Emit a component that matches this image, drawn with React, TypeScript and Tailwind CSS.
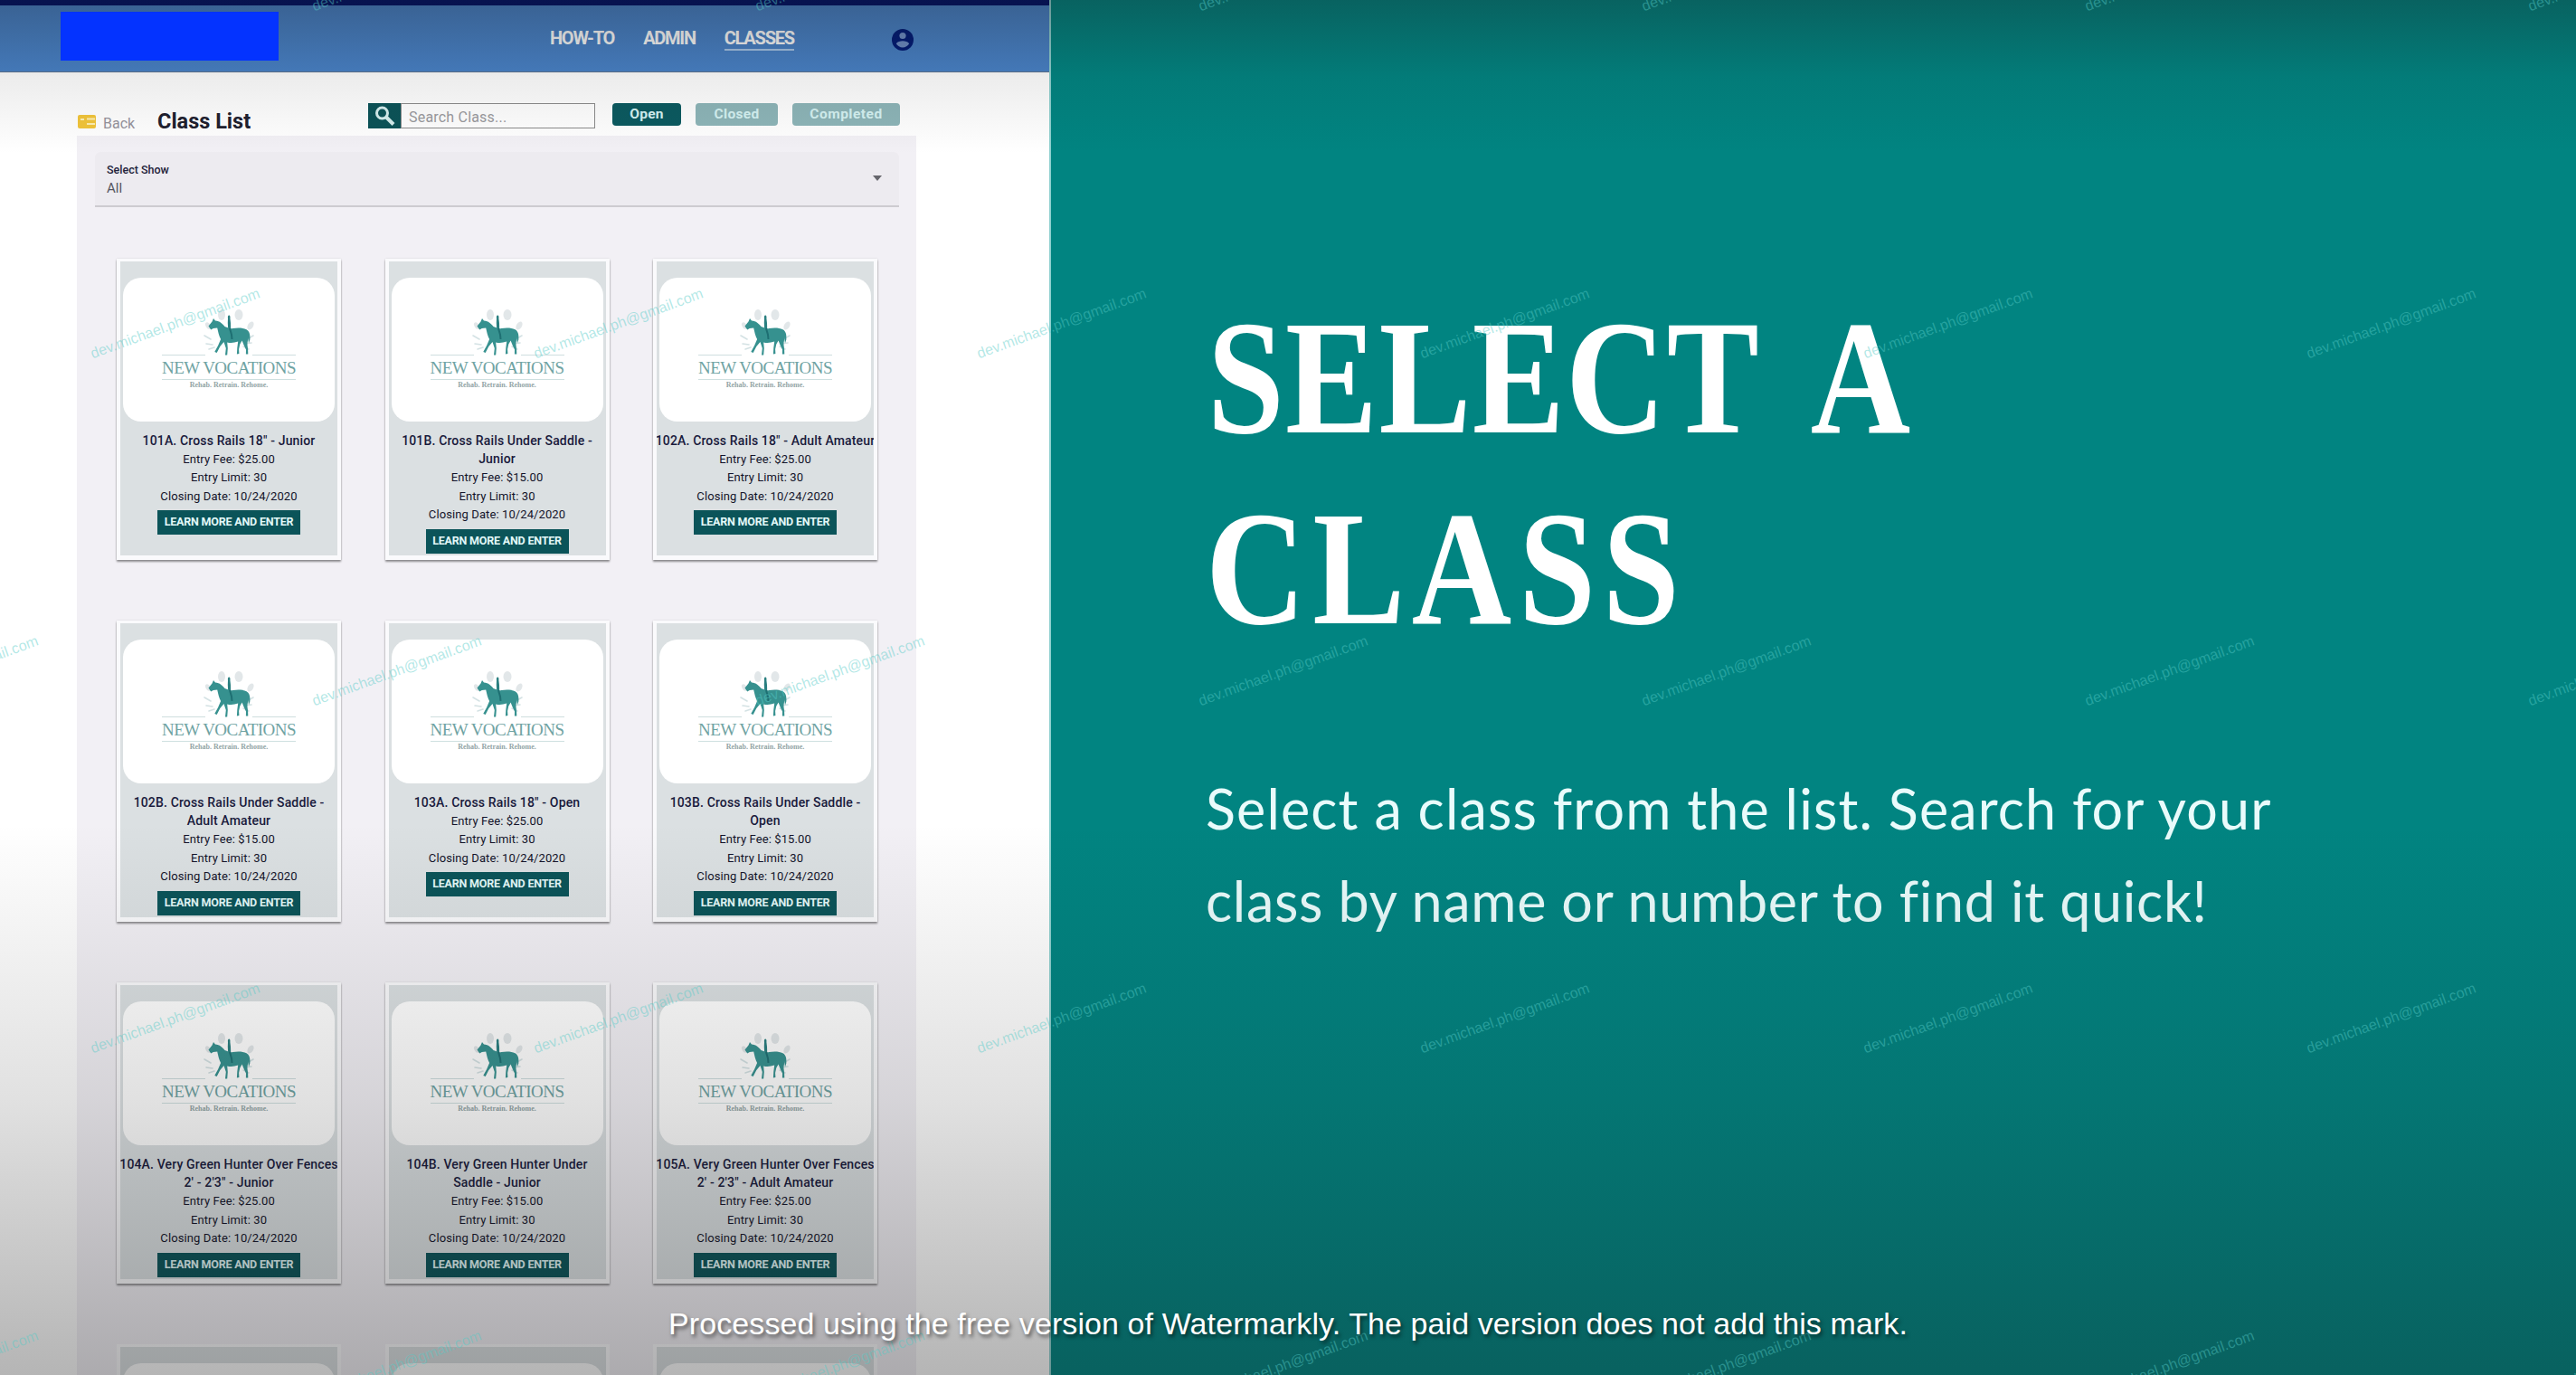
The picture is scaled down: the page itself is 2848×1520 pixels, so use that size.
import React from "react";

type ClassItem = { title: string[]; fee: string };

const rows: ClassItem[][] = [
  [
    { title: ['101A. Cross Rails 18" - Junior'], fee: "$25.00" },
    { title: ["101B. Cross Rails Under Saddle -", "Junior"], fee: "$15.00" },
    { title: ['102A. Cross Rails 18" - Adult Amateur'], fee: "$25.00" },
  ],
  [
    { title: ["102B. Cross Rails Under Saddle -", "Adult Amateur"], fee: "$15.00" },
    { title: ['103A. Cross Rails 18" - Open'], fee: "$25.00" },
    { title: ["103B. Cross Rails Under Saddle -", "Open"], fee: "$15.00" },
  ],
  [
    { title: ["104A. Very Green Hunter Over Fences", "2' - 2'3\" - Junior"], fee: "$25.00" },
    { title: ["104B. Very Green Hunter Under", "Saddle - Junior"], fee: "$15.00" },
    { title: ["105A. Very Green Hunter Over Fences", "2' - 2'3\" - Adult Amateur"], fee: "$25.00" },
  ],
];

function HorseMark() {
  return (
    <svg width="64" height="54" viewBox="0 0 64 54" className="block">
      <g fill="#b9c4ca" opacity="0.4">
        <ellipse cx="24" cy="8" rx="4" ry="6" />
        <ellipse cx="43" cy="8" rx="4.5" ry="6" />
        <ellipse cx="56" cy="20" rx="3" ry="5" transform="rotate(30 56 20)" />
        <ellipse cx="9" cy="20" rx="2.5" ry="4" transform="rotate(-30 9 20)" />
      </g>
      <g stroke="#a9c6ca" strokeWidth="1.600" fill="none" opacity="0.5" strokeLinecap="round">
        <path d="M5 31l7 4M7 40l7 1M10 46l6-2M59 31l-7 4M57 39l-7 1M54 46l-6-3" />
      </g>
      <path
        d="M31.200 24l-.4-7 .2-5c-.4-2 .2-3.600 1.200-3.600s1.600 1.600 1.200 3.600l.6 5 .2 7z"
        fill="#2a7f80"
      />
      <path
        d="M9.500 20.500l4-5 1.500-3.500 2 2.500c5 .2 8 3.500 10.500 6.500l4 1.500c1.500.8 3.500.8 5 .5 5-.8 11-.8 15 1.200 3.700 2 4.200 6.300 3.800 11.300l-1.300 4-.9-6.500c.2 4-.8 5-.6 8.500l.6 4.500.2 5.500h-2.400l.1-5-2.600-5.500-1.800-4.500-2.300 4-1.200 5.500.3 5-2.500.5.4-7 .9-7c-4 1.500-8 2-12 1l.6 6.500-.6 7.500h-2.200l.8-7.500-2.300-7-4.200 5-3.600 7-2.400-1 3.800-7 3-7c-1.900-3.500-2.900-8-3.900-12.500l-4.400.5-2.600 1.500z"
        fill="#36918f"
      />
      <path d="M33 23l2 7 .500 5" stroke="#1e6f72" strokeWidth="2" fill="none" />
    </svg>
  );
}

function Logo() {
  return (
    <div className="flex h-[159px] flex-col items-center rounded-[20px] bg-white pt-[33px]">
      <HorseMark />
      <div className="-mt-[2px] flex w-[148px] justify-between">
        <span className="h-px w-[48px] bg-[#cfdedf]" />
        <span className="h-px w-[48px] bg-[#cfdedf]" />
      </div>
      <p className="mt-[4px] h-[20px] whitespace-nowrap font-['Liberation_Serif'] text-[19px] leading-[20px] tracking-[-0.55px] text-[#6fa3a3]">
        NEW VOCATIONS
      </p>
      <span className="mt-[2px] h-px w-[148px] bg-[#cfe0e0]" />
      <p className="mt-[1px] whitespace-nowrap font-['Liberation_Serif'] text-[8px] font-bold leading-[10px] text-[#93a5a6]">
        Rehab. Retrain. Rehome.
      </p>
    </div>
  );
}

function ClassCard({ item }: { item: ClassItem }) {
  return (
    <article className="h-[333px] w-[248px] border-x-[4px] border-t-[3px] border-b-[5px] border-[#fafafc] bg-[#dbe0e2] px-[3px] pt-[18px] text-center font-['Roboto'] shadow-[0_2px_2px_rgba(0,0,0,0.4),0_0_2px_rgba(0,0,0,0.12)]">
      <Logo />
      <div className="-mx-[3px] mt-[11px] overflow-hidden">
        {item.title.map((line) => (
          <h3
            key={line}
            className="flex h-[20.500px] items-center justify-center whitespace-nowrap text-[14px] font-medium tracking-[0.15px] text-[#191a3c]"
          >
            {line}
          </h3>
        ))}
        <div className="text-[13px] leading-[20.500px] tracking-[0.1px] text-[#14142a]">
          <p>Entry Fee: {item.fee}</p>
          <p>Entry Limit: 30</p>
          <p>Closing Date: 10/24/2020</p>
        </div>
      </div>
      <button className="mx-auto mt-[5px] flex h-[27px] w-[158px] items-center justify-center whitespace-nowrap bg-[#0b5459] text-[12.500px] font-bold tracking-[-0.2px] text-[#e2f8f8]">
        LEARN MORE AND ENTER
      </button>
    </article>
  );
}

function SiteHeader() {
  return (
    <header className="flex h-[80px] items-start border-t-[6px] border-b border-t-[#001168] border-b-[#5d7390] bg-[#4882c8] font-['Roboto']">
      <div className="relative z-10 mt-[7px] ml-[67px] h-[54px] w-[241px] bg-[#0433ff]" />
      <nav className="ml-[300px] flex gap-[32px] pt-[25px] text-[20px] font-bold leading-[22px] tracking-[-1.250px] text-white">
        <a>HOW-TO</a>
        <a>ADMIN</a>
        <a className="border-b-2 border-[#a9c8ea] pb-px">CLASSES</a>
      </nav>
      <svg className="mt-[26px] ml-[108px]" width="24" height="24" viewBox="0 0 24 24">
        <circle cx="12" cy="12" r="12" fill="#001a78" />
        <circle cx="12" cy="7.500" r="3.600" fill="#6f8fc8" />
        <path d="M4.800 16.200c1.500-2.300 4.300-3 7.200-3s5.700.7 7.200 3c-1.600 2.700-4.200 4.200-7.200 4.200s-5.600-1.500-7.200-4.200z" fill="#6f8fc8" />
      </svg>
    </header>
  );
}

function Toolbar() {
  return (
    <div className="flex h-[70px] items-start font-['Roboto']">
      <svg className="mt-[47px] ml-[86px]" width="20" height="15" viewBox="0 0 20 15">
        <rect width="20" height="15" rx="2" fill="#f2c53a" />
        <path d="M10 4.500h9M10 10h9M3 5h4" stroke="#fdf0b4" strokeWidth="1.800" />
      </svg>
      <span className="mt-[47px] ml-[8px] w-[60px] text-[16px] leading-[20px] text-[#96939c]">Back</span>
      <h1 className="mt-[39px] w-[233px] whitespace-nowrap text-[23.500px] font-bold leading-[30px] text-[#20202e]">
        Class List
      </h1>
      <div className="mt-[34px] flex h-[28px] w-[251px]">
        <span className="flex w-[36px] items-center justify-center bg-[#0b5358]">
          <svg width="24" height="24" viewBox="0 0 24 24" fill="none" stroke="#d5eeee">
            <circle cx="9.500" cy="9" r="6" strokeWidth="3" />
            <path d="M14 13.500l8 8" strokeWidth="4" />
          </svg>
        </span>
        <span className="flex flex-1 items-center border border-[#8c8c8c] bg-white pt-[3px] pl-[8px] text-[16px] tracking-[0.2px] text-[#9a9a9e]">
          Search Class...
        </span>
      </div>
      <div className="mt-[34px] ml-[19px] flex h-[25px] gap-[16px] text-[15.500px] font-bold text-[#d5f2f2]">
        <span className="flex w-[76px] items-center justify-center rounded-[4px] bg-[#0b5a60] tracking-[0.2px]">Open</span>
        <span className="flex w-[91px] items-center justify-center rounded-[4px] bg-[#8db5b8] tracking-[0.3px]">Closed</span>
        <span className="flex w-[119px] items-center justify-center rounded-[4px] bg-[#8db5b8] tracking-[0.5px]">Completed</span>
      </div>
    </div>
  );
}

function ClassListPage() {
  return (
    <section className="flex h-[1520px] w-[1160px] flex-none flex-col overflow-hidden bg-white">
      <SiteHeader />
      <Toolbar />
      <main className="ml-[85px] flex w-[928px] flex-1 flex-col bg-[#f2f0f5] pt-[18px]">
        <div className="ml-[20px] flex h-[61px] w-[889px] flex-none items-center justify-between rounded-t-[6px] border-b-2 border-[#cdcbd0] bg-[#edebf0] pr-[18px] pl-[13px] font-['Roboto']">
          <div className="pt-[2px] text-[#23233a]">
            <p className="text-[12.500px] font-medium leading-[18px]">Select Show</p>
            <p className="text-[15px] leading-[22px] text-[#55555f]">All</p>
          </div>
          <svg width="12" height="7" viewBox="0 0 12 7">
            <path d="M1 0h10L6 6z" fill="#66666c" />
          </svg>
        </div>
        <div className="mt-[57px] ml-[44px] flex w-[841px] flex-col gap-[67px]">
          {rows.map((row, i) => (
            <div key={i} className="flex justify-between">
              {row.map((item) => (
                <ClassCard key={item.title[0]} item={item} />
              ))}
            </div>
          ))}
          <div className="flex h-[34px] justify-between overflow-hidden">
            {[0, 1, 2].map((n) => (
              <div key={n} className="h-[34px] w-[248px] border-x-[4px] border-t-[3px] border-[#fafafc] bg-[#dbe0e2] px-[3px] pt-[18px]">
                <div className="h-[40px] rounded-t-[20px] bg-white" />
              </div>
            ))}
          </div>
        </div>
      </main>
    </section>
  );
}

function Slide() {
  return (
    <section className="flex h-[1520px] flex-1 flex-col border-l-2 border-[#8fd0cf] bg-[#018481] pl-[171px]">
      <h2 className="mt-[312px] w-[1100px] origin-left scale-x-[0.85] whitespace-nowrap font-['Liberation_Serif'] text-[180px] font-bold leading-[211px] text-white">
        <span className="block pl-[2px] tracking-[1.500px] [word-spacing:32px]">SELECT A</span>
        <span className="block tracking-[9px]">CLASS</span>
      </h2>
      <p className="mt-[109px] flex flex-col whitespace-nowrap font-['Lato'] text-[61px] leading-[102px] text-[#e9fbfb]">
        <span className="tracking-[1.150px]">Select a class from the list. Search for your</span>
        <span className="tracking-[0.700px]">class by name or number to find it quick!</span>
      </p>
    </section>
  );
}

const watermarks = [0, 1, 2, 3, 4].flatMap((r) =>
  [0, 1, 2, 3, 4, 5, 6].map((c) => ({
    left: (r % 2 === 0 ? 350 : 105) + (c - 1) * 490,
    top: -7 + r * 384,
  })),
);

function Overlay() {
  return (
    <div className="pointer-events-none absolute inset-0 overflow-hidden">
      <div className="absolute inset-x-0 top-0 h-[170px] bg-linear-to-b from-[#181818]/31 via-[#181818]/8 to-transparent" />
      <div className="absolute inset-x-0 bottom-0 h-[610px] bg-linear-to-b from-transparent via-[#181818]/13 to-[#181818]/32" />
      {watermarks.map((m, i) => (
        <span
          key={i}
          className="absolute origin-bottom-left -rotate-20 whitespace-nowrap font-['Liberation_Sans'] text-[16.200px] leading-[26px] text-[#55cbc7]/45"
          style={{ left: m.left, top: m.top }}
        >
          dev.michael.ph@gmail.com
        </span>
      ))}
      <p className="absolute top-[1443px] left-0 w-full text-center font-['Liberation_Sans'] text-[34px] leading-[40px] tracking-[0.090px] text-white [text-shadow:2px_3px_4px_rgba(0,0,0,0.55)]">
        Processed using the free version of Watermarkly. The paid version does not add this mark.
      </p>
    </div>
  );
}

export default function App() {
  return (
    <div className="relative flex h-[1520px] w-[2848px] overflow-hidden">
      <ClassListPage />
      <Slide />
      <Overlay />
    </div>
  );
}
